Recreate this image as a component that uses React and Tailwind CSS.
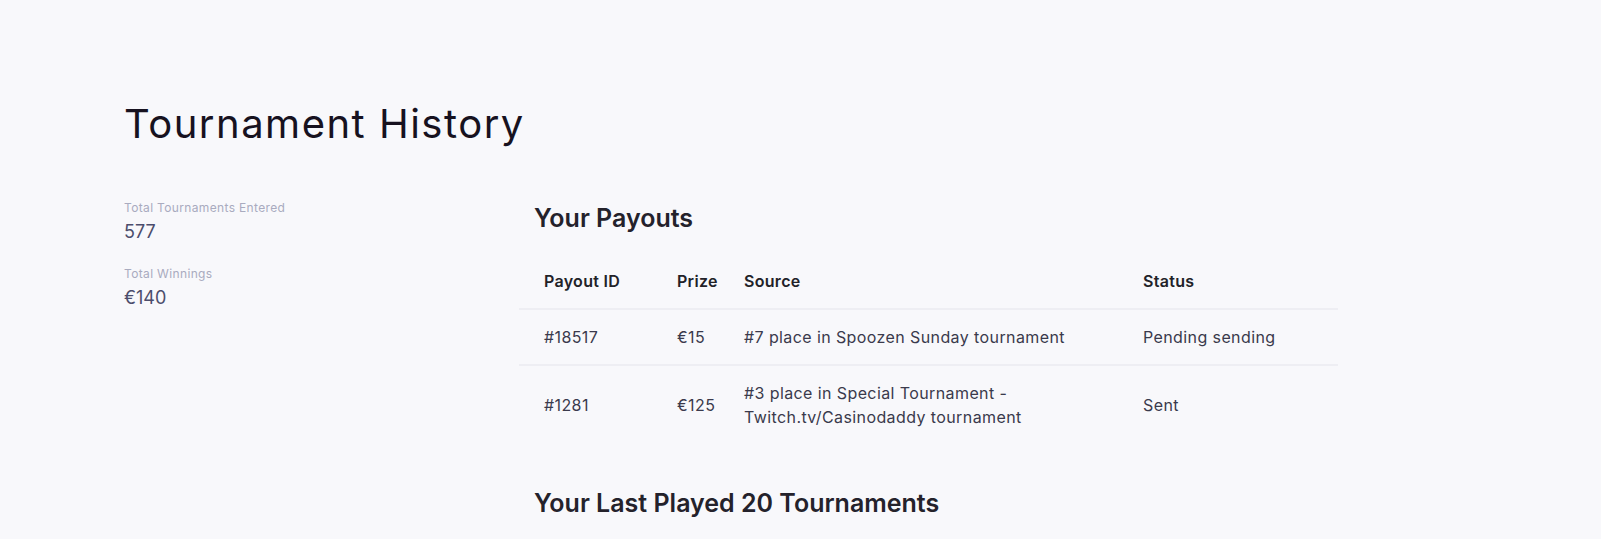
import React from 'react';

const payouts = [
  { id: '#18517', prize: '€15', source: '#7 place in Spoozen Sunday tournament', status: 'Pending sending' },
  { id: '#1281', prize: '€125', source: '#3 place in Special Tournament - Twitch.tv/Casinodaddy tournament', status: 'Sent' },
];

const stats = [
  { label: 'Total Tournaments Entered', value: '577' },
  { label: 'Total Winnings', value: '€140' },
];

const StatBlock = ({ label, value }) => (
  <div className="mb-[20px]">
    <div className="text-[12px] leading-[18px] tracking-[0.35px] text-[#a9abbf]">{label}</div>
    <div className="mt-[2px] text-[18px] leading-[26px] text-[#4c4d6c]">{value}</div>
  </div>
);

const App = () => {
  return (
    <div className="min-h-[539px] bg-[#f8f8fb] font-['Inter','Noto_Sans',sans-serif] pt-[100px] pl-[124px]">
      <h1 className="text-[40px] leading-[48px] font-normal text-[#17121f] tracking-[1.5px]">
        Tournament History
      </h1>

      <div className="flex mt-[51px]">
        {/* Sidebar stats */}
        <aside className="w-[395px] shrink-0">
          {stats.map((s) => (
            <StatBlock key={s.label} label={s.label} value={s.value} />
          ))}
        </aside>

        {/* Payouts */}
        <main className="w-[819px]">
          <h2 className="pt-[3px] pl-[15px] text-[25px] leading-[32px] font-semibold text-[#24222b]">Your Payouts</h2>

          <table className="mt-[20px] w-full table-fixed border-collapse text-[16px] leading-[24px] tracking-[0.4px]">
            <colgroup>
              <col className="w-[148px]" />
              <col className="w-[67px]" />
              <col className="w-[399px]" />
              <col />
            </colgroup>
            <thead>
              <tr className="border-b-2 border-[#eeeef3]">
                <th className="pl-[25px] py-[15px] text-left font-semibold tracking-[0.3px] text-[#222228]">Payout ID</th>
                <th className="pl-[10px] py-[15px] text-left font-semibold tracking-[0.3px] text-[#222228]">Prize</th>
                <th className="pl-[10px] py-[15px] text-left font-semibold tracking-[0.3px] text-[#222228]">Source</th>
                <th className="pl-[10px] py-[15px] text-left font-semibold tracking-[0.3px] text-[#222228]">Status</th>
              </tr>
            </thead>
            <tbody className="text-[#3a3a4c]">
              {payouts.map((p) => (
                <tr key={p.id} className="border-b-2 border-[#eeeef3] last:border-b-0">
                  <td className="pl-[25px] py-[15px] align-middle">{p.id}</td>
                  <td className="pl-[10px] py-[15px] align-middle">{p.prize}</td>
                  <td className="pl-[10px] pr-[20px] py-[15px] align-middle">{p.source}</td>
                  <td className="pl-[10px] py-[15px] align-middle">{p.status}</td>
                </tr>
              ))}
            </tbody>
          </table>

          <h2 className="mt-[43px] pl-[15px] text-[25px] leading-[32px] font-semibold text-[#24222b]">
            Your Last Played 20 Tournaments
          </h2>
        </main>
      </div>
    </div>
  );
};

export default App;
